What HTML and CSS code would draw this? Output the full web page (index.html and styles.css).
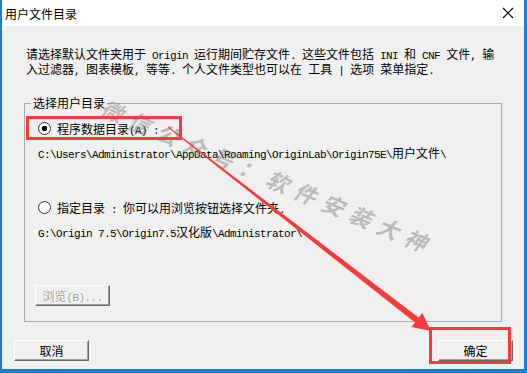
FILE: index.html
```html
<!DOCTYPE html>
<html>
<head>
  <title>用户文件目录</title>
  <link rel="stylesheet" href="styles.css">
</head>
<body>
  <div class="window">
    <div class="titlebar">
      <span class="title">用户文件目录</span>
      <svg class="close" width="12" height="12" viewBox="0 0 12 12">
        <path d="M1 1 L11 11 M11 1 L1 11" stroke="#000" stroke-width="1.1" fill="none"/>
      </svg>
    </div>

    <p class="intro">
      请选择默认文件夹用于<span class="en"> Origin </span>运行期间贮存文件<span class="en">. </span>这些文件包括<span class="en"> INI </span>和<span class="en"> CNF </span>文件<span class="en">, </span>输<br>
      入过滤器<span class="en">, </span>图表模板<span class="en">, </span>等等<span class="en">. </span>个人文件类型也可以在<span class="en"> </span>工具<span class="en"> | </span>选项<span class="en"> </span>菜单指定<span class="en">.</span>
    </p>

    <fieldset class="group">
      <legend>选择用户目录</legend>
      <div class="option first">
        <span class="radio checked"></span>
        <span>程序数据目录<span class="en">(A) :</span></span>
      </div>
      <div class="path"><span class="en">C:\Users\Administrator\AppData\Roaming\OriginLab\Origin75E\</span>用户文件<span class="en">\</span></div>

      <div class="option second">
        <span class="radio"></span>
        <span>指定目录<span class="en"> : </span>你可以用浏览按钮选择文件夹<span class="en">.</span></span>
      </div>
      <div class="path"><span class="en">G:\Origin 7.5\Origin7.5</span>汉化版<span class="en">\Administrator\</span></div>

      <button class="btn browse" disabled>浏览<span class="en">(B)...</span></button>
    </fieldset>

    <div class="footer">
      <button class="btn">取消</button>
      <button class="btn">确定</button>
    </div>

    <!-- annotation layer drawn over the dialog -->
    <svg class="marks" width="527" height="373" viewBox="0 0 527 373">
      <text class="watermark" x="268" y="176" text-anchor="middle" dominant-baseline="central" transform="rotate(23 268 176)">微信公众号：软件安装大神</text>
      <rect x="27.5" y="117.5" width="153" height="21" fill="none" stroke="#f53c3c" stroke-width="3"/>
      <rect x="430.5" y="328.5" width="79" height="34" fill="none" stroke="#f53c3c" stroke-width="3"/>
      <polygon points="167.7,127.4 168.3,126.6 418.6,317.6 422.3,312.9 431,331 411.3,327.1 415,322.4" fill="#f53c3c"/>
    </svg>
  </div>
</body>
</html>
```

FILE: styles.css
```css
body {
  margin: 0;
  background-color: #f0f0f0;
}

.window {
  position: relative;
  width: 527px;
  height: 373px;
  box-sizing: border-box;
  border-style: solid;
  border-color: #1a7fd4;
  border-width: 0 3px 4px 2px;
  background-color: #f0f0f0;
  font-family: "Noto Sans CJK SC", sans-serif;
  font-size: 12px;
  color: #000;
  overflow: hidden;
}

.en {
  font-family: "Liberation Mono", monospace;
  font-size: 11px;
  letter-spacing: -0.6px;
  line-height: 1;
}

.titlebar {
  height: 26px;
  background-color: #fff;
  display: flex;
  align-items: center;
  justify-content: space-between;
  padding: 0 10px 0 3px;
}

.intro {
  margin: 21px 0 0 24px;
  line-height: 14px;
}

.group {
  margin: 19px 0 0 22px;
  width: 478px;
  box-sizing: border-box;
  padding: 0 0 15px 0;
  border: 1px solid #adadad;
  min-inline-size: 0;
}

.group legend {
  margin-left: 6px;
  padding: 0 2px;
  line-height: 14px;
}

.option {
  display: flex;
  align-items: center;
  height: 24px;
  padding-left: 13px;
}

.option.first {
  margin-top: 6px;
}

.option.second {
  margin-top: 29px;
}

.radio {
  width: 11px;
  height: 11px;
  border: 1px solid #333;
  border-radius: 50%;
  background-color: #fff;
  margin-right: 6px;
}

.radio.checked {
  background: radial-gradient(circle, #000 0 2.5px, #fff 3px);
}

.path {
  height: 26px;
  line-height: 26px;
  padding-left: 13px;
  white-space: nowrap;
}

.btn {
  width: 75px;
  height: 21px;
  padding: 0;
  font-family: "Noto Sans CJK SC", sans-serif;
  font-size: 12px;
  color: #000;
  background-color: #f0f0f0;
  border: 1px solid;
  border-color: #fff #696969 #696969 #fff;
  box-shadow: inset -1px -1px #a0a0a0;
  box-sizing: border-box;
}

.browse {
  display: block;
  margin: 40px 0 0 10px;
  color: #a0a0a0;
  text-shadow: 1px 1px #fff;
}

.footer {
  display: flex;
  justify-content: space-between;
  margin-top: 18px;
  padding: 0 11px 0 12px;
}

.marks {
  position: absolute;
  top: 0;
  left: -2px;
  pointer-events: none;
}

.watermark {
  font-family: "Noto Sans CJK SC", sans-serif;
  font-size: 22px;
  font-weight: bold;
  font-style: italic;
  letter-spacing: 8px;
  fill: rgba(110, 110, 110, 0.42);
}
```
